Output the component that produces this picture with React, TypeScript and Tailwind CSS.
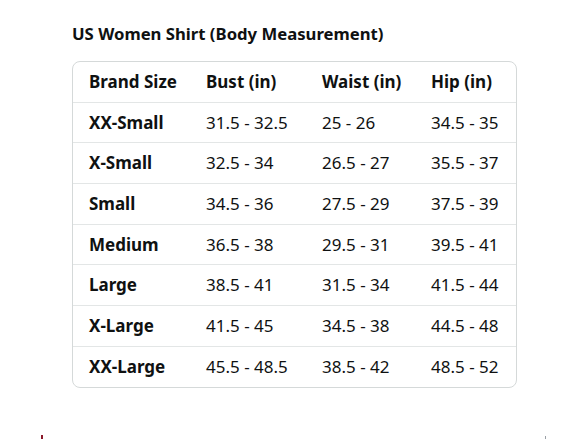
import React from "react";

const rows = [
  ["XX-Small", "31.5 - 32.5", "25 - 26", "34.5 - 35"],
  ["X-Small", "32.5 - 34", "26.5 - 27", "35.5 - 37"],
  ["Small", "34.5 - 36", "27.5 - 29", "37.5 - 39"],
  ["Medium", "36.5 - 38", "29.5 - 31", "39.5 - 41"],
  ["Large", "38.5 - 41", "31.5 - 34", "41.5 - 44"],
  ["X-Large", "41.5 - 45", "34.5 - 38", "44.5 - 48"],
  ["XX-Large", "45.5 - 48.5", "38.5 - 42", "48.5 - 52"],
];

export default function App() {
  return (
    <div className="w-[588px] h-[441px] bg-white relative overflow-hidden text-[#0f1111]" style={{ fontFamily: '"Noto Sans", "Open Sans", sans-serif' }}>
      <div className="pl-[72px] pt-[22px]">
        <h1 className="text-[16.7px] font-bold leading-[24px]">US Women Shirt (Body Measurement)</h1>
        <div className="mt-[15px] w-[445px] border border-[#d5d9d9] rounded-[8px] overflow-hidden">
          <table className="w-full border-collapse text-[17px] table-fixed">
            <thead>
              <tr className="h-[40px] border-b border-[#e3e6e6]">
                <th className="w-[117px] pl-[16px] text-left font-bold whitespace-nowrap">Brand Size</th>
                <th className="w-[116px] pl-[16px] text-left font-bold whitespace-nowrap">Bust (in)</th>
                <th className="w-[109px] pl-[16px] text-left font-bold whitespace-nowrap">Waist (in)</th>
                <th className="pl-[16px] text-left font-bold whitespace-nowrap">Hip (in)</th>
              </tr>
            </thead>
            <tbody>
              {rows.map((r, i) => (
                <tr key={i} className={`h-[40.7px] ${i < rows.length - 1 ? "border-b border-[#e3e6e6]" : ""}`}>
                  <td className="pl-[16px] font-bold whitespace-nowrap">{r[0]}</td>
                  <td className="pl-[16px] whitespace-nowrap">{r[1]}</td>
                  <td className="pl-[16px] whitespace-nowrap">{r[2]}</td>
                  <td className="pl-[16px] whitespace-nowrap">{r[3]}</td>
                </tr>
              ))}
            </tbody>
          </table>
        </div>
      </div>
      <div className="absolute left-[41px] top-[435px] w-[2px] h-[4px] bg-[#8b1a2b]" />
      <div className="absolute left-[545px] top-[436px] w-[1px] h-[3px] bg-[#9aa0a6]" />
    </div>
  );
}
